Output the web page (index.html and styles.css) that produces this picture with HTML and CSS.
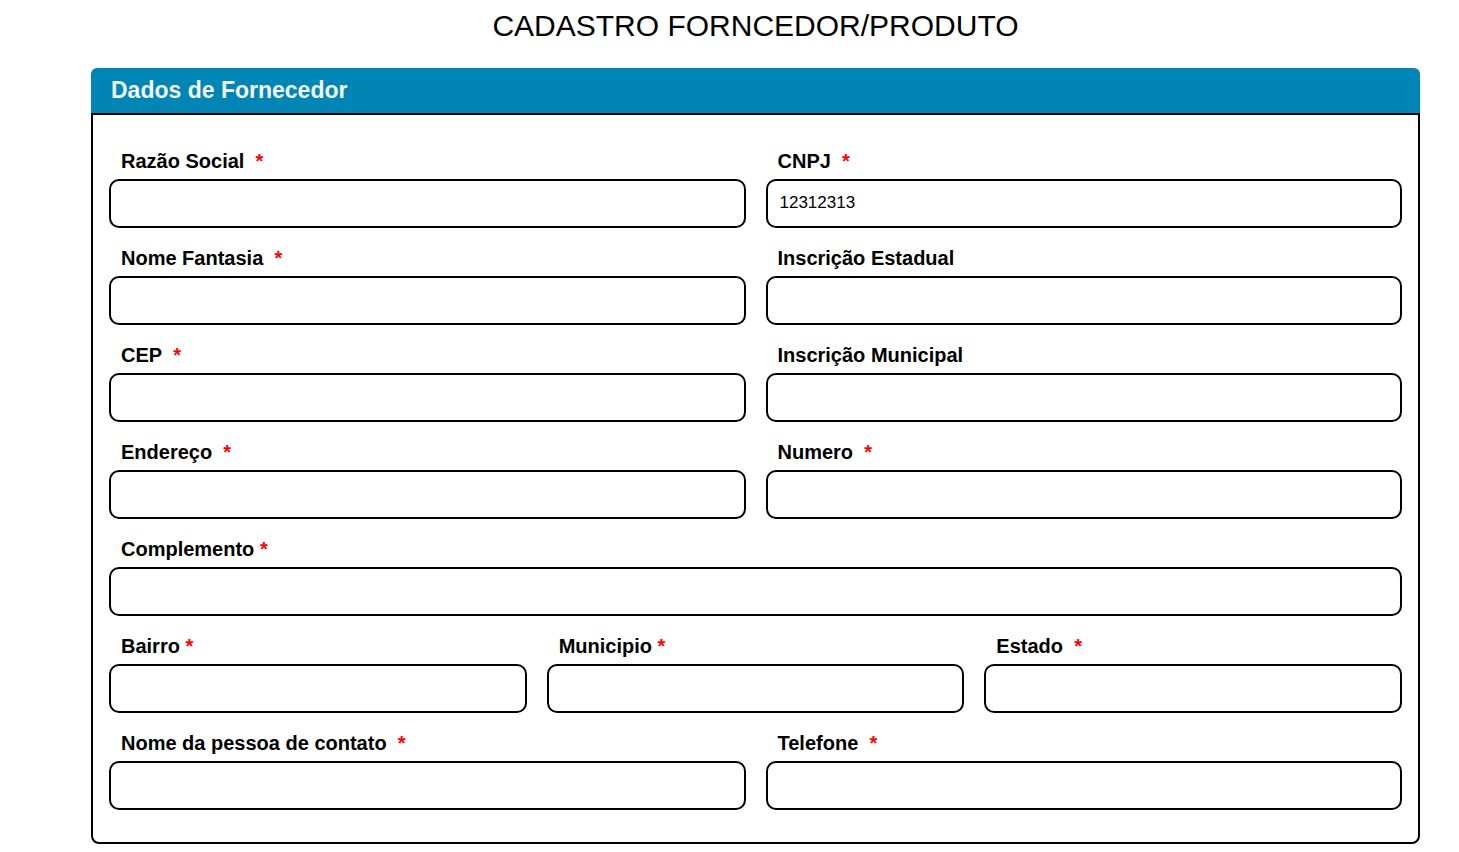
FILE: index.html
```html
<!DOCTYPE html>
<html lang="pt-BR">
<head>
<meta charset="utf-8">
<meta name="viewport" content="width=device-width, initial-scale=1">
<title>Cadastro</title>
<link rel="stylesheet" href="styles.css">
</head>
<body>
<main class="page">
  <h1 class="page-title">CADASTRO FORNCEDOR/PRODUTO</h1>
  <section class="panel">
    <h2 class="panel-heading">Dados de Fornecedor</h2>
    <form class="panel-body">
      <div class="row">
        <div class="field"><label class="label" for="razao">Razão Social&nbsp; <span class="required">*</span></label><input class="input" id="razao" type="text"></div>
        <div class="field"><label class="label" for="cnpj">CNPJ&nbsp; <span class="required">*</span></label><input class="input" id="cnpj" type="text" value="12312313"></div>
      </div>
      <div class="row">
        <div class="field"><label class="label" for="fantasia">Nome Fantasia&nbsp; <span class="required">*</span></label><input class="input" id="fantasia" type="text"></div>
        <div class="field"><label class="label" for="estadual">Inscrição Estadual</label><input class="input" id="estadual" type="text"></div>
      </div>
      <div class="row">
        <div class="field"><label class="label" for="cep">CEP&nbsp; <span class="required">*</span></label><input class="input" id="cep" type="text"></div>
        <div class="field"><label class="label" for="municipal">Inscrição Municipal</label><input class="input" id="municipal" type="text"></div>
      </div>
      <div class="row">
        <div class="field"><label class="label" for="endereco">Endereço&nbsp; <span class="required">*</span></label><input class="input" id="endereco" type="text"></div>
        <div class="field"><label class="label" for="numero">Numero&nbsp; <span class="required">*</span></label><input class="input" id="numero" type="text"></div>
      </div>
      <div class="row">
        <div class="field"><label class="label" for="complemento">Complemento <span class="required">*</span></label><input class="input" id="complemento" type="text"></div>
      </div>
      <div class="row">
        <div class="field"><label class="label" for="bairro">Bairro <span class="required">*</span></label><input class="input" id="bairro" type="text"></div>
        <div class="field"><label class="label" for="municipio">Municipio <span class="required">*</span></label><input class="input" id="municipio" type="text"></div>
        <div class="field"><label class="label" for="estado">Estado&nbsp; <span class="required">*</span></label><input class="input" id="estado" type="text"></div>
      </div>
      <div class="row">
        <div class="field"><label class="label" for="contato">Nome da pessoa de contato&nbsp; <span class="required">*</span></label><input class="input" id="contato" type="text"></div>
        <div class="field"><label class="label" for="telefone">Telefone&nbsp; <span class="required">*</span></label><input class="input" id="telefone" type="text"></div>
      </div>
    </form>
  </section>
</main>
</body>
</html>
```
FILE: styles.css
```css
* { box-sizing: border-box; }
body {
  margin: 0;
  background: #fff;
  color: #000;
  font-family: "Liberation Sans", Arial, sans-serif;
}
.page { padding: 8px 39px 8px 91px; }
.page-title {
  margin: 0 0 24px;
  font-size: 30px;
  font-weight: 400;
  line-height: 36px;
  text-align: center;
}
.panel-heading {
  margin: 0;
  padding: 9px 20px;
  border-radius: 6px 6px 0 0;
  background: #0085b4;
  color: #f0f8fa;
  font-size: 23px;
  line-height: 27px;
}
.panel-body {
  padding: 16px 16px 32px;
  border: 2px solid #000;
  border-radius: 0 0 8px 8px;
}
.row { display: flex; gap: 20px; }
.field { flex: 1 1 0; min-width: 0; }
.label {
  display: block;
  padding: 18px 12px 6px;
  font-size: 20px;
  font-weight: 700;
  line-height: 24px;
}
.required { color: #f00; }
.input {
  display: block;
  width: 100%;
  height: 49px;
  padding: 0 12px 2px;
  border: 2px solid #000;
  border-radius: 10px;
  background: #fff;
  color: #000;
  font: 17px "Liberation Sans", Arial, sans-serif;
}
```
